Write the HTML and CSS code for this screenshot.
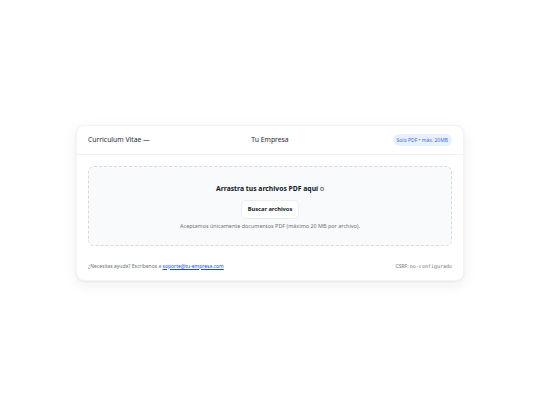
FILE: index.html
```html
<!DOCTYPE html>
<html lang="es">
<head>
<meta charset="utf-8">
<title>Subir CV</title>
<link rel="stylesheet" href="styles.css">
</head>
<body>
<main class="page">
  <section class="card">
    <header class="card-header">
      <div class="title">Curriculum Vitae —</div>
      <div class="brand">Tu Empresa</div>
      <div class="badge-wrap"><span class="badge">Solo PDF • máx. 20MB</span></div>
    </header>
    <div class="card-body">
      <div class="dropzone">
        <p class="drop-title"><strong>Arrastra tus archivos PDF aquí</strong> o</p>
        <button class="btn" type="button">Buscar archivos</button>
        <p class="drop-note">Aceptamos únicamente documentos PDF (máximo 20 MB por archivo).</p>
      </div>
    </div>
    <footer class="card-footer">
      <div class="help">¿Necesitas ayuda? Escríbenos a <a href="#">soporte@tu-empresa.com</a></div>
      <div class="csrf">CSRF: <code>no-configurado</code></div>
    </footer>
  </section>
</main>
</body>
</html>
```
FILE: styles.css
```css
* { box-sizing: border-box; }
html, body { margin: 0; padding: 0; }
body {
  background: #ffffff;
  font-family: "Noto Sans", "Open Sans", sans-serif;
  color: #111827;
}
.page {
  width: 540px;
  height: 405px;
  display: flex;
  align-items: center;
  justify-content: center;
}
.card {
  width: 388px;
  background: #fff;
  border-radius: 8px;
  box-shadow: 0 1px 2px rgba(15, 23, 42, 0.05), 0 4px 14px rgba(15, 23, 42, 0.07);
  border: 1px solid #f3f4f6;
}
.card-header {
  display: grid;
  grid-template-columns: 1fr auto 1fr;
  align-items: center;
  height: 29px;
  padding: 0 11px;
  border-bottom: 1px solid #f0f1f4;
  font-size: 6.8px;
}
.title { color: #1f2937; }
.brand { color: #1f2937; text-align: center; }
.badge-wrap { display: flex; justify-content: flex-end; }
.badge {
  background: #e8f0fe;
  color: #3b6fd8;
  font-size: 5px;
  padding: 3px 4px;
  border-radius: 999px;
}
.card-body { padding: 11px 11px 0; }
.dropzone {
  border: 1px dashed #d6dae0;
  border-radius: 6px;
  background: #f9fafb;
  height: 80px;
  display: flex;
  flex-direction: column;
  align-items: center;
  padding-top: 16px;
}
.drop-title {
  margin: 0;
  font-size: 6.8px;
  color: #1f2937;
  line-height: 11px;
}
.drop-title strong { font-weight: 700; color: #111827; }
.btn {
  margin-top: 6px;
  height: 19px;
  padding: 0 6px;
  background: #fff;
  border: 1px solid #eceef1;
  border-radius: 5px;
  font-family: inherit;
  font-size: 5.7px;
  font-weight: 700;
  color: #111827;
}
.drop-note {
  margin: 3px 0 0;
  font-size: 5.45px;
  color: #6b7280;
  line-height: 8px;
}
.card-footer {
  display: flex;
  justify-content: space-between;
  align-items: center;
  padding: 6px 11px 0;
  height: 34px;
  font-size: 5px;
  color: #6b7280;
}
.help a { color: #1d4ed8; text-decoration: underline; }
.csrf code {
  font-family: "DejaVu Sans Mono", "Liberation Mono", monospace;
  font-size: 5px;
}
```
